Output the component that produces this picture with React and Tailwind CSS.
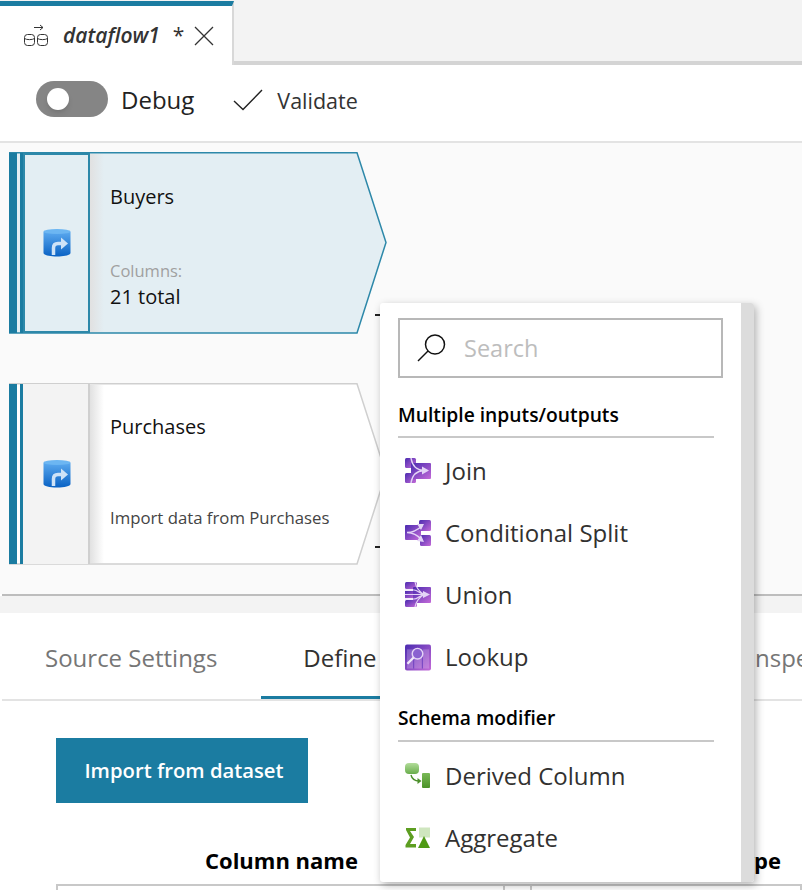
const font = { fontFamily: '"Open Sans", "Noto Sans", sans-serif' };

function DataflowIcon() {
  return (
    <svg width="26" height="24" viewBox="0 0 26 24" fill="none" stroke="#333" strokeWidth="1">
      <path d="M11 3.500h9M17 1l3 2.500L17 6" />
      <rect x="1.500" y="10.500" width="10" height="11" rx="3" />
      <path d="M1.500 14.500c2 1.500 8 1.500 10 0" />
      <rect x="14.500" y="10.500" width="10" height="11" rx="3" />
      <path d="M14.500 14.500c2 1.500 8 1.500 10 0" />
    </svg>
  );
}

function SourceIcon({ id }) {
  return (
    <svg width="28" height="30" viewBox="0 0 28 30">
      <defs>
        <linearGradient id={id} x1="0" y1="0" x2="0" y2="1">
          <stop offset="0" stopColor="#5aa8ee" />
          <stop offset="1" stopColor="#0a62c4" />
        </linearGradient>
      </defs>
      <path d="M0.500 4v21c0 2 6 3.500 13.500 3.500s13.500-1.500 13.500-3.500V4z" fill={`url(#${id})`} />
      <ellipse cx="14" cy="3.500" rx="13.500" ry="2.500" fill="#6cb6f2" />
      <path d="M10.500 27v-7c0-3 1.500-4.500 4.500-4.500h4" fill="none" stroke="#cfe3f7" strokeWidth="3.500" />
      <path d="M18 9.500l7 6-7 6z" fill="#cfe3f7" />
    </svg>
  );
}

function PurpleDefs({ id }) {
  return (
    <defs>
      <linearGradient id={id} x1="0" y1="0" x2="1" y2="1">
        <stop offset="0" stopColor="#4a2bb0" />
        <stop offset="1" stopColor="#c46ad8" />
      </linearGradient>
    </defs>
  );
}

function JoinIcon() {
  return (
    <svg width="26" height="26" viewBox="0 0 26 26">
      <PurpleDefs id="joinFill" />
      <rect x="0" y="0" width="11" height="10" rx="1.500" fill="url(#joinFill)" />
      <rect x="0" y="15" width="11" height="10" rx="1.500" fill="url(#joinFill)" />
      <rect x="6" y="5" width="20" height="16" rx="1" fill="url(#joinFill)" />
      <path d="M6 0c1 7 4 12 13 12.500M6 25c1-7 4-12 13-12.500" fill="none" stroke="#e4d4f6" strokeWidth="1.400" />
      <path d="M17 8.500l7 4-7 4z" fill="#e4d4f6" />
    </svg>
  );
}

function SplitIcon() {
  return (
    <svg width="26" height="26" viewBox="0 0 26 26">
      <PurpleDefs id="splitFill" />
      <rect x="0" y="5" width="16" height="15" rx="1" fill="url(#splitFill)" />
      <rect x="14" y="0" width="12" height="11" rx="1.500" fill="url(#splitFill)" />
      <rect x="15" y="15" width="11" height="11" rx="1.500" fill="url(#splitFill)" />
      <path d="M2 12.500c6 0 10-2 15-6.500M2 12.500c6 0 10 2 15 7.500" fill="none" stroke="#e4d4f6" strokeWidth="1.400" />
      <path d="M12 4l7 0-3 6zM12 21l7 1-3-7z" fill="#e4d4f6" />
    </svg>
  );
}

function UnionIcon() {
  return (
    <svg width="26" height="26" viewBox="0 0 26 26">
      <PurpleDefs id="unionFill" />
      <rect x="0" y="0" width="12" height="7" rx="1.500" fill="url(#unionFill)" />
      <rect x="0" y="9" width="12" height="7" fill="url(#unionFill)" />
      <rect x="0" y="18" width="12" height="7" rx="1.500" fill="url(#unionFill)" />
      <rect x="8" y="5" width="18" height="16" rx="1" fill="url(#unionFill)" />
      <path d="M0 8h9c4 0 6 4.500 11 4.500M0 12.500h20M0 17h9c4 0 6-4.500 11-4.500M10 0c1 5 3 9 9 12.500M10 25c1-5 3-9 9-12.500" fill="none" stroke="#e4d4f6" strokeWidth="1.200" />
      <path d="M18 9l7 3.500-7 3.500z" fill="#e4d4f6" />
    </svg>
  );
}

function LookupIcon() {
  return (
    <svg width="27" height="27" viewBox="0 0 27 27">
      <PurpleDefs id="lookupFill" />
      <rect x="0" y="0" width="27" height="27" rx="2" fill="url(#lookupFill)" />
      <rect x="2" y="5" width="23" height="20" fill="#e6d8f6" opacity="0.25" />
      <path d="M9 5v20M18 5v20" stroke="#6d3fc0" strokeWidth="1" fill="none" />
      <circle cx="13" cy="9.500" r="5.500" fill="#8a62d0" stroke="#e4d4f6" strokeWidth="1.500" />
      <path d="M9 13.500L2.500 20" stroke="#f0e8fa" strokeWidth="2.500" />
    </svg>
  );
}

function DerivedIcon() {
  return (
    <svg width="26" height="26" viewBox="0 0 26 26">
      <defs>
        <linearGradient id="derivedFill" x1="0" y1="0" x2="0" y2="1">
          <stop offset="0" stopColor="#b2dc9a" />
          <stop offset="1" stopColor="#69ad4c" />
        </linearGradient>
        <linearGradient id="derivedBar" x1="0" y1="0" x2="0" y2="1">
          <stop offset="0" stopColor="#79b857" />
          <stop offset="1" stopColor="#4c9328" />
        </linearGradient>
      </defs>
      <rect x="0" y="0" width="14" height="11" rx="4" fill="url(#derivedFill)" />
      <rect x="17" y="10" width="8" height="15" rx="1" fill="url(#derivedBar)" />
      <path d="M6 12c1 4 3 6 8 6" fill="none" stroke="#4c8f2b" strokeWidth="1.400" />
      <path d="M12.500 15l4 3-4 3z" fill="#4c8f2b" />
    </svg>
  );
}

function AggregateIcon() {
  return (
    <svg width="26" height="22" viewBox="0 0 26 22">
      <path d="M1 1h10v3H5l4 6-4 7h6v3.500H0.500v-2.500l4.500-7.500L1 3z" fill="#5d9e21" />
      <rect x="14" y="0.500" width="11" height="10" fill="#cfe6bf" />
      <path d="M13 21l6-12 6 12z" fill="#4f9a15" />
    </svg>
  );
}

function Node({ fill, stroke, railBg, railBorder, iconId, children }) {
  return (
    <div className="relative w-[378px] h-[182px]">
      <svg className="absolute inset-0" width="378" height="182" viewBox="0 0 378 182" fill="none">
        <path d="M0.750 0.750H348L377 90.500L348 181H0.750Z" fill={fill} stroke={stroke} strokeWidth="1.500" />
      </svg>
      <div className="relative flex h-full">
        <div className="w-[8px] my-[1px] bg-[#1b7ca1]" />
        <div className="w-[3px]" />
        <div className="w-[3px] my-[1px] bg-[#1b7ca1]" />
        <div className={`w-[67px] my-[1px] flex items-center justify-center ${railBg} ${railBorder}`}>
          <SourceIcon id={iconId} />
        </div>
        <div className="w-[14px] my-[2px] bg-gradient-to-r from-[#e1e1e1] to-transparent" />
        <div className="flex-1 pl-[6px] relative">{children}</div>
      </div>
    </div>
  );
}

function MenuItem({ icon, label, className = '' }) {
  return (
    <div className={`flex items-center h-[62px] pl-[7px] ${className}`}>
      <div className="w-[26px] flex justify-center">{icon}</div>
      <span className="ml-[14px] text-[24px] text-[#323130]">{label}</span>
    </div>
  );
}

function SectionTitle({ children, className }) {
  return (
    <div className={`mr-[27px] border-b-2 border-[#c8c8c8] text-[19.25px] font-semibold leading-[26px] text-black ${className}`}>
      {children}
    </div>
  );
}

export default function App() {
  return (
    <div style={font} className="relative w-[802px] h-[890px] overflow-hidden bg-white text-black">
      {/* tab strip */}
      <div className="flex h-[65px] bg-[#f3f3f3]">
        <div className="w-[234px] mt-[1px] border-t-[5px] border-[#1b7ca1] border-r-2 border-r-[#d8d8d8] bg-white flex items-center pl-[23px]">
          <DataflowIcon />
          <span className="ml-[14px] text-[21px] font-semibold italic text-[#333]">dataflow1</span>
          <span className="ml-[13px] text-[21px] text-[#333]">*</span>
          <svg className="ml-[10px]" width="20" height="20" viewBox="0 0 20 20" stroke="#333" strokeWidth="1.300">
            <path d="M1 1l18 18M19 1L1 19" />
          </svg>
        </div>
        <div className="flex-1 flex flex-col justify-end">
          <div className="h-[4px] bg-[#d4d4d4]" />
        </div>
      </div>

      {/* toolbar */}
      <div className="h-[78px] flex items-center pl-[36px] pb-[6px] border-b-2 border-[#e3e3e3]">
        <div className="w-[72px] h-[36px] mb-[2px] rounded-full bg-[#858585] flex items-center pl-[11px]">
          <div className="w-[22px] h-[22px] rounded-full bg-white shadow-md" />
        </div>
        <span className="ml-[13px] text-[24px] text-[#222]">Debug</span>
        <svg className="ml-[39px]" width="30" height="22" viewBox="0 0 30 22" fill="none" stroke="#222" strokeWidth="1.400">
          <path d="M1 12l9 8.500L29 1" />
        </svg>
        <span className="ml-[14px] mt-[2px] text-[21.500px] text-[#333]">Validate</span>
      </div>

      {/* canvas */}
      <div className="h-[451px] bg-[#fafafa] pt-[9px] pl-[9px] flex flex-col gap-[49px]">
        <Node fill="#e3eef3" stroke="#2d88a9" railBg="bg-[#e3eef3]" railBorder="border-2 border-[#2d88a9]" iconId="dbBuyers">
          <div className="pt-[31px] text-[20px] font-medium leading-[28px] text-[#111]">Buyers</div>
          <div className="mt-[48px] text-[16.500px] leading-[24px] text-[#a0a0a0]">Columns:</div>
          <div className="text-[20px] font-medium leading-[28px] text-[#111]">21 total</div>
        </Node>
        <Node fill="#ffffff" stroke="#cfcfcf" railBg="bg-[#f3f3f3]" railBorder="border-l-2 border-l-transparent border-r-2 border-r-[#cfcfcf]" iconId="dbPurchases">
          <div className="pt-[30px] text-[20px] font-medium leading-[28px] text-[#111]">Purchases</div>
          <div className="mt-[65px] text-[16.750px] leading-[24px] text-[#444]">Import data from Purchases</div>
        </Node>
      </div>

      {/* split bar */}
      <div className="h-[2px] ml-[2px] bg-[#bdbdbd]" />
      <div className="h-[17px] bg-[#f3f3f3]" />

      {/* bottom tabs */}
      <div className="h-[88px] flex border-b-2 border-[#e3e3e3] ml-[2px] whitespace-nowrap overflow-hidden">
        <div className="shrink-0 pl-[43px] pt-[27px] text-[24px] leading-[36px] text-[#767676]">Source Settings</div>
        <div className="shrink-0 ml-[44px] w-[180px] h-[87px] border-b-[4px] border-[#1b7ca1] pt-[27px] pl-[42px] text-[24px] leading-[36px] text-[#323130]">Define schema</div>
        <div className="shrink-0 ml-[307px] pt-[27px] text-[24px] leading-[36px] text-[#767676]">Inspect</div>
      </div>

      {/* schema content */}
      <div className="pl-[56px] pt-[37px]">
        <button className="w-[252px] h-[65px] pl-[4px] bg-[#1b7ca1] text-white text-[20.250px] font-semibold">Import from dataset</button>
      </div>
      <div className="flex mt-[42px] text-[22px] font-bold leading-[30px] text-black">
        <div className="ml-[205px]">Column name</div>
        <div className="ml-auto mr-[21px]">Type</div>
      </div>
      <div className="flex h-[20px] mt-[9px] pl-[56px]">
        <div className="w-[449px] border-2 border-[#c8c8c8]" />
        <div className="w-[25px] border-t-2 border-[#c8c8c8]" />
        <div className="flex-1 border-2 border-[#c8c8c8]" />
      </div>

      {/* connector stubs behind the menu */}
      <div className="absolute left-[375px] top-[314px] w-[6px] h-[2px] bg-[#222]" />
      <div className="absolute left-[375px] top-[546px] w-[6px] h-[2px] bg-[#222]" />

      {/* add transformation menu */}
      <div className="absolute left-[380px] top-[303px] w-[374px] h-[579px] flex bg-white rounded-[3px] shadow-[2px_3px_8px_rgba(0,0,0,0.3)] overflow-hidden">
        <div className="flex-1 pl-[18px] pt-[15px]">
          <div className="w-[325px] h-[60px] border-2 border-[#b8b8b8] flex items-center pl-[17px]">
            <svg width="30" height="30" viewBox="0 0 30 30" fill="none" stroke="#111" strokeWidth="1.500">
              <circle cx="18" cy="11.500" r="9.500" />
              <path d="M11 18L1 28" />
            </svg>
            <span className="ml-[17px] pt-[2px] text-[23.500px] text-[#bdbdbd]">Search</span>
          </div>
          <SectionTitle className="mt-[24px] pb-[8px]">Multiple inputs/outputs</SectionTitle>
          <MenuItem icon={<JoinIcon />} label="Join" className="mt-[2px]" />
          <MenuItem icon={<SplitIcon />} label="Conditional Split" />
          <MenuItem icon={<UnionIcon />} label="Union" />
          <MenuItem icon={<LookupIcon />} label="Lookup" />
          <SectionTitle className="mt-[17px] pb-[9px]">Schema modifier</SectionTitle>
          <MenuItem icon={<DerivedIcon />} label="Derived Column" className="mt-[3px]" />
          <MenuItem icon={<AggregateIcon />} label="Aggregate" />
        </div>
        <div className="w-[13px] bg-[#dcdcdc]" />
      </div>
    </div>
  );
}
